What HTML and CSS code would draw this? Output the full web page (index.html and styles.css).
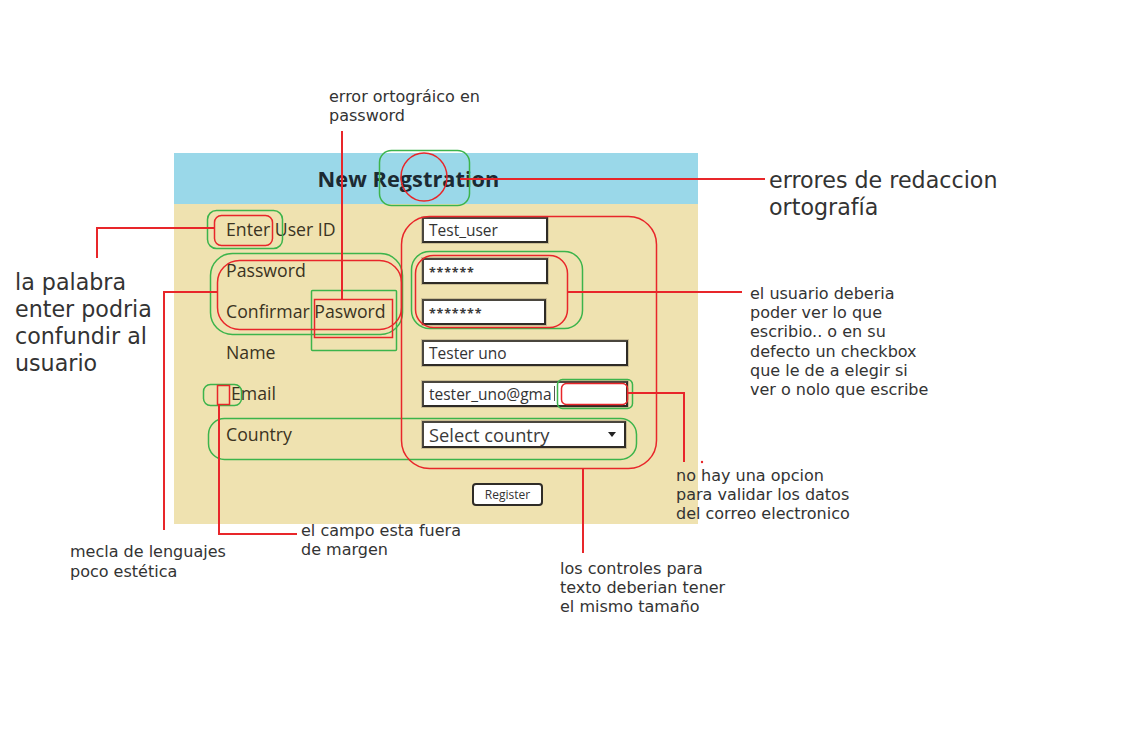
FILE: index.html
```html
<!DOCTYPE html>
<html lang="es">
<head>
<meta charset="utf-8">
<title>New Regstration - anotaciones</title>
<link rel="stylesheet" href="styles.css">
</head>
<body>
<div class="canvas">
  <div class="panel">
    <div class="panel-head">New Regstration</div>
    <div class="panel-body">
      <div class="form-grid">
        <div class="label">Enter User ID</div>
        <div class="field w-short">Test_user</div>
        <div class="label">Password</div>
        <div class="field w-short stars">******</div>
        <div class="label">Confirmar Pasword</div>
        <div class="field w-short2 stars">*******</div>
        <div class="label">Name</div>
        <div class="field w-long">Tester uno</div>
        <div class="label label-off">Email</div>
        <div class="field w-long">tester_uno@gma<span class="caret"></span></div>
        <div class="label">Country</div>
        <div class="field select w-select">Select country<span class="arrow"></span></div>
      </div>
      <div class="actions"><button class="btn" type="button">Register</button></div>
    </div>
  </div>

  <svg class="marks" width="1129" height="742" viewBox="0 0 1129 742" aria-hidden="true">
    <g class="green" fill="none">
      <rect x="379.5" y="150.5" width="90" height="55" rx="12"/>
      <rect x="207.5" y="210.5" width="75" height="38" rx="9"/>
      <rect x="210.5" y="253.5" width="192" height="81" rx="22"/>
      <rect x="311.5" y="290.5" width="85" height="60" rx="1"/>
      <rect x="411.5" y="251.5" width="171" height="77" rx="18"/>
      <rect x="203.5" y="384.5" width="38" height="21" rx="7"/>
      <rect x="557.5" y="379.5" width="75" height="29" rx="5"/>
      <rect x="208.5" y="418.5" width="428" height="41" rx="16"/>
    </g>
    <g class="red" fill="none">
      <ellipse cx="424" cy="177" rx="23" ry="24"/>
      <rect x="214.5" y="215.5" width="58" height="30" rx="7"/>
      <rect x="217.5" y="260.5" width="184" height="69" rx="22"/>
      <rect x="314.5" y="299.5" width="78" height="38"/>
      <rect x="415.5" y="255.5" width="152" height="72" rx="18"/>
      <rect x="217.5" y="385.5" width="12" height="19"/>
      <rect x="561.5" y="383.5" width="66" height="21" rx="5"/>
      <rect x="401.5" y="216.5" width="255" height="252" rx="28"/>
    </g>
    <g class="red-line" fill="none">
      <polyline points="460,179 765,179"/>
      <polyline points="342,131 342,299"/>
      <polyline points="214,228 97,228 97,258"/>
      <polyline points="217,292 164,292 164,530"/>
      <polyline points="567,292 742,292"/>
      <polyline points="219,404 219,534 297,534"/>
      <polyline points="627,393 684,393 684,462"/>
      <polyline points="583,468 583,553"/>
    </g>
    <circle cx="702" cy="462" r="1.2" fill="#e8262a"/>
  </svg>

  <div class="note small n-ortho">error ortográico en<br>password</div>
  <div class="note big n-redac">errores de redaccion<br>ortografía</div>
  <div class="note big n-enter">la palabra<br>enter podria<br>confundir al<br>usuario</div>
  <div class="note small n-ver">el usuario deberia<br>poder ver lo que<br>escribio.. o en su<br>defecto un checkbox<br>que le de a elegir si<br>ver o nolo que escribe</div>
  <div class="note small n-mail">no hay una opcion<br>para validar los datos<br>del correo electronico</div>
  <div class="note small n-mecla">mecla de lenguajes<br>poco estética</div>
  <div class="note small n-campo">el campo esta fuera<br>de margen</div>
  <div class="note small n-ctrl">los controles para<br>texto deberian tener<br>el mismo tamaño</div>
</div>
</body>
</html>
```

FILE: styles.css
```css
html, body {
  margin: 0;
  padding: 0;
  background: #ffffff;
}

.canvas {
  position: relative;
  width: 1129px;
  height: 742px;
  box-sizing: border-box;
  padding: 153px 0 0 174px;
  background: #ffffff;
  overflow: hidden;
}

/* ---------- form panel ---------- */
.panel {
  width: 524px;
  font-family: "Open Sans", "Noto Sans", sans-serif;
}

.panel-head {
  height: 51px;
  box-sizing: border-box;
  padding-right: 55px;
  background: #9ad8e9;
  display: flex;
  align-items: center;
  justify-content: center;
  font-size: 21.8px;
  font-weight: 700;
  color: #1c2a33;
}

.panel-body {
  height: 320px;
  box-sizing: border-box;
  padding: 5px 0 0 52px;
  background: #efe2b0;
}

.form-grid {
  display: grid;
  grid-template-columns: 196px auto;
  grid-auto-rows: 41px;
  align-items: center;
  justify-items: start;
}

.label {
  font-size: 17.7px;
  color: #3a3322;
  line-height: 1;
}

.label-off {
  padding-left: 5px;
}

.field {
  position: relative;
  height: 26px;
  box-sizing: border-box;
  padding: 0 5px;
  display: flex;
  align-items: center;
  background: #ffffff;
  border: 2px solid #4a463e;
  border-bottom-color: #2e2b26;
  border-right-color: #2e2b26;
  box-shadow: 0 0 0 1px rgba(90, 80, 60, 0.25);
  font-size: 15.5px;
  color: #333333;
  white-space: nowrap;
  overflow: hidden;
}

.w-short { width: 126px; }
.w-short2 { width: 124px; }
.w-long { width: 206px; }
.w-select { width: 204px; }

.stars {
  font-weight: 700;
  font-size: 12.5px;
  letter-spacing: 0.8px;
  padding-top: 4px;
  color: #3a3a3a;
}

.caret {
  display: inline-block;
  width: 1px;
  height: 15px;
  margin-left: 2px;
  background: #555555;
}

.select {
  height: 27px;
  font-size: 18.3px;
  color: #3a3a3a;
  justify-content: space-between;
}

.arrow {
  width: 0;
  height: 0;
  margin-right: 3px;
  border-left: 4px solid transparent;
  border-right: 4px solid transparent;
  border-top: 5px solid #222222;
}

.actions {
  margin-top: 27px;
  padding-left: 246px;
}

.btn {
  width: 71px;
  height: 23px;
  padding: 0;
  background: #ffffff;
  border: 2px solid #2f2c27;
  border-radius: 4px;
  font-family: "Open Sans", "Noto Sans", sans-serif;
  font-size: 12px;
  color: #333333;
}

/* ---------- annotations ---------- */
.marks {
  position: absolute;
  left: 0;
  top: 0;
  pointer-events: none;
}

.green {
  stroke: #3cb44b;
  stroke-width: 1.5;
}

.red {
  stroke: #e8262a;
  stroke-width: 1.5;
}

.red-line {
  stroke: #e8262a;
  stroke-width: 2;
}

.note {
  position: absolute;
  font-family: "DejaVu Sans", "Liberation Sans", sans-serif;
  color: #333333;
  white-space: nowrap;
}

.small {
  font-size: 16px;
  line-height: 19.2px;
}

.big {
  font-size: 22.2px;
  line-height: 27px;
}

.n-ortho { left: 329px; top: 87px; }
.n-redac { left: 769px; top: 167px; }
.n-enter { left: 15px; top: 269px; }
.n-ver   { left: 750px; top: 284px; }
.n-mail  { left: 676px; top: 466px; }
.n-mecla { left: 70px;  top: 542px; line-height: 20px; }
.n-campo { left: 301px; top: 521px; }
.n-ctrl  { left: 560px; top: 559px; }
```
